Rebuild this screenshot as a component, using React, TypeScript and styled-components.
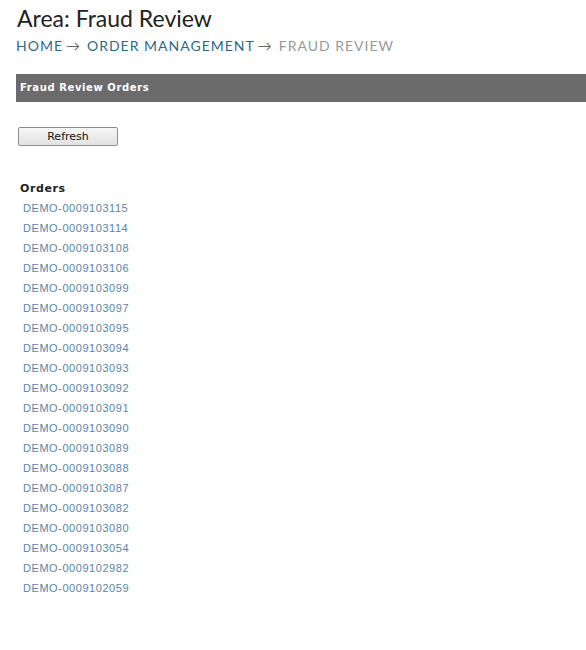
import React from 'react'
import styled, { createGlobalStyle } from 'styled-components'

const GlobalStyle = createGlobalStyle`
    body {
        margin: 0;
        background: #fff;
    }
`

const orders = [
    'DEMO-0009103115',
    'DEMO-0009103114',
    'DEMO-0009103108',
    'DEMO-0009103106',
    'DEMO-0009103099',
    'DEMO-0009103097',
    'DEMO-0009103095',
    'DEMO-0009103094',
    'DEMO-0009103093',
    'DEMO-0009103092',
    'DEMO-0009103091',
    'DEMO-0009103090',
    'DEMO-0009103089',
    'DEMO-0009103088',
    'DEMO-0009103087',
    'DEMO-0009103082',
    'DEMO-0009103080',
    'DEMO-0009103054',
    'DEMO-0009102982',
    'DEMO-0009102059',
]

export default function App() {
    return (
        <Page>
            <GlobalStyle />
            <Title>Area: Fraud Review</Title>
            <Crumbs>
                <Crumb>HOME</Crumb>
                <Arrow>→</Arrow>
                <Crumb>ORDER MANAGEMENT</Crumb>
                <Arrow>→</Arrow>
                <Crumb $current>FRAUD REVIEW</Crumb>
            </Crumbs>
            <Panel>
                <PanelHeader>Fraud Review Orders</PanelHeader>
                <Toolbar>
                    <Button type="button">Refresh</Button>
                </Toolbar>
                <OrdersTitle>Orders</OrdersTitle>
                <OrderList>
                    {orders.map((id) => (
                        <OrderLink key={id} href="#">
                            {id}
                        </OrderLink>
                    ))}
                </OrderList>
            </Panel>
        </Page>
    )
}

const Page = styled.div`
    padding: 5px 0 40px 16px;
`

const Title = styled.h1`
    font-family: Lato, sans-serif;
    font-size: 23px;
    font-weight: 400;
    color: #222;
    margin: 0 0 0 1px;
    line-height: 27px;
`

const Crumbs = styled.div`
    display: flex;
    align-items: baseline;
    font-family: Lato, sans-serif;
    font-size: 14px;
    letter-spacing: 1px;
    line-height: 18px;
    margin-top: 5px;
`

const Crumb = styled.span<{ $current?: boolean }>`
    color: ${({ $current }) => ($current ? '#999' : '#2b6a87')};
`

const Arrow = styled.span`
    color: #666;
    margin: 0 7px 0 3px;
    letter-spacing: 0;
`

const Panel = styled.div`
    margin-top: 19px;
`

const PanelHeader = styled.div`
    background: #6b6b6b;
    color: #fff;
    font-family: 'DejaVu Sans', Verdana, sans-serif;
    font-size: 10px;
    font-weight: 700;
    letter-spacing: 0.6px;
    height: 28px;
    line-height: 28px;
    padding-left: 4px;
`

const Toolbar = styled.div`
    padding: 24px 0 0 2px;
`

const Button = styled.button`
    width: 100px;
    height: 19px;
    padding: 0;
    border: 1px solid #8e8e8e;
    border-radius: 2px;
    background: linear-gradient(#f6f6f6, #e2e2e2);
    font-family: 'DejaVu Sans', Tahoma, sans-serif;
    font-size: 11px;
    color: #111;
`

const OrdersTitle = styled.div`
    font-family: 'DejaVu Sans', Verdana, sans-serif;
    font-size: 11px;
    font-weight: 700;
    letter-spacing: 0.6px;
    color: #222;
    margin: 36px 0 0 4px;
    line-height: 14px;
`

const OrderList = styled.div`
    display: flex;
    flex-direction: column;
    margin: 2px 0 0 7px;
`

const OrderLink = styled.a`
    font-family: 'Liberation Sans', Arial, sans-serif;
    font-size: 11px;
    letter-spacing: 0.55px;
    color: #5a84a8;
    text-decoration: none;
    line-height: 20px;
`
